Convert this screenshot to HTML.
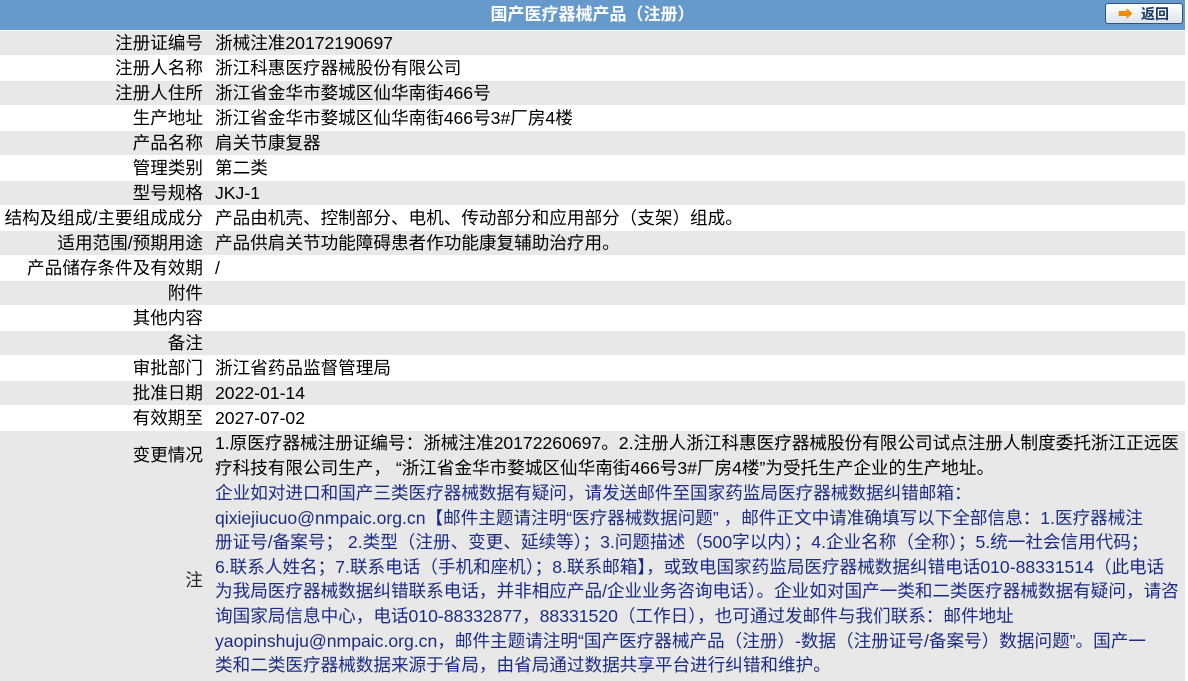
<!DOCTYPE html>
<html><head><meta charset="utf-8"><style>
body{margin:0;width:1188px;height:681px;overflow:hidden;background:#fff;font-family:"Liberation Sans","Noto Sans CJK SC",sans-serif;font-size:17.6px;}
.hd{position:absolute;left:0;top:0;width:1185px;height:30px;background:#6699cc;color:#fff;font-weight:bold;text-align:center;line-height:30px;font-size:17px;}
.btn{position:absolute;left:1105px;top:3px;width:78px;height:21px;border:1px solid #34557a;border-radius:3px;background:linear-gradient(#fff,#dde3ea);font-size:14px;font-weight:bold;color:#1a3a6a;line-height:21px;box-sizing:border-box;padding-left:12px;}
.btn span{color:#f08a00;font-size:15px;margin-right:8px}
.r{position:absolute;left:0;width:1185px;line-height:24.6px;overflow:hidden;}
.g{background:#e8e8e8}
.l{position:absolute;left:0;width:203px;text-align:right;white-space:nowrap;}
.v{position:absolute;left:215px;white-space:nowrap;}
.b{color:#1c2c86}
</style></head><body>
<div class="hd">国产医疗器械产品（注册）</div>
<div class="btn"><span>➡</span>返回</div>
<div class="r g" style="top:31px;height:24px"><div class="l">注册证编号</div><div class="v">浙械注准20172190697</div></div>
<div class="r" style="top:56px;height:24px"><div class="l">注册人名称</div><div class="v">浙江科惠医疗器械股份有限公司</div></div>
<div class="r g" style="top:81px;height:24px"><div class="l">注册人住所</div><div class="v">浙江省金华市婺城区仙华南街466号</div></div>
<div class="r" style="top:106px;height:24px"><div class="l">生产地址</div><div class="v">浙江省金华市婺城区仙华南街466号3#厂房4楼</div></div>
<div class="r g" style="top:131px;height:24px"><div class="l">产品名称</div><div class="v">肩关节康复器</div></div>
<div class="r" style="top:156px;height:24px"><div class="l">管理类别</div><div class="v">第二类</div></div>
<div class="r g" style="top:181px;height:24px"><div class="l">型号规格</div><div class="v">JKJ-1</div></div>
<div class="r" style="top:206px;height:24px"><div class="l">结构及组成/主要组成成分</div><div class="v">产品由机壳、控制部分、电机、传动部分和应用部分（支架）组成。</div></div>
<div class="r g" style="top:231px;height:24px"><div class="l">适用范围/预期用途</div><div class="v">产品供肩关节功能障碍患者作功能康复辅助治疗用。</div></div>
<div class="r" style="top:256px;height:24px"><div class="l">产品储存条件及有效期</div><div class="v">/</div></div>
<div class="r g" style="top:281px;height:24px"><div class="l">附件</div><div class="v"></div></div>
<div class="r" style="top:306px;height:24px"><div class="l">其他内容</div><div class="v"></div></div>
<div class="r g" style="top:331px;height:24px"><div class="l">备注</div><div class="v"></div></div>
<div class="r" style="top:356px;height:24px"><div class="l">审批部门</div><div class="v">浙江省药品监督管理局</div></div>
<div class="r g" style="top:381px;height:24px"><div class="l">批准日期</div><div class="v">2022-01-14</div></div>
<div class="r" style="top:406px;height:24px"><div class="l">有效期至</div><div class="v">2027-07-02</div></div>
<div class="r g" style="top:431px;height:250px"></div>
<div class="r" style="top:431px;height:49px"><div class="l" style="top:12px">变更情况</div><div class="v">1.原医疗器械注册证编号：浙械注准20172260697。2.注册人浙江科惠医疗器械股份有限公司试点注册人制度委托浙江正远医<br>疗科技有限公司生产， “浙江省金华市婺城区仙华南街466号3#厂房4楼”为受托生产企业的生产地址。</div></div>
<div class="r b" style="top:481px;height:200px"><div class="l" style="top:87px;color:#222">注</div><div class="v">企业如对进口和国产三类医疗器械数据有疑问，请发送邮件至国家药监局医疗器械数据纠错邮箱：<br>qixiejiucuo@nmpaic.org.cn【邮件主题请注明“医疗器械数据问题” ，邮件正文中请准确填写以下全部信息：1.医疗器械注<br>册证号/备案号； 2.类型（注册、变更、延续等）；3.问题描述（500字以内）；4.企业名称（全称）；5.统一社会信用代码；<br>6.联系人姓名；7.联系电话（手机和座机）；8.联系邮箱】，或致电国家药监局医疗器械数据纠错电话010-88331514（此电话<br>为我局医疗器械数据纠错联系电话，并非相应产品/企业业务咨询电话）。企业如对国产一类和二类医疗器械数据有疑问，请咨<br>询国家局信息中心，电话010-88332877，88331520（工作日），也可通过发邮件与我们联系：邮件地址<br>yaopinshuju@nmpaic.org.cn，邮件主题请注明“国产医疗器械产品（注册）-数据（注册证号/备案号）数据问题”。国产一<br>类和二类医疗器械数据来源于省局，由省局通过数据共享平台进行纠错和维护。</div></div>
</body></html>
